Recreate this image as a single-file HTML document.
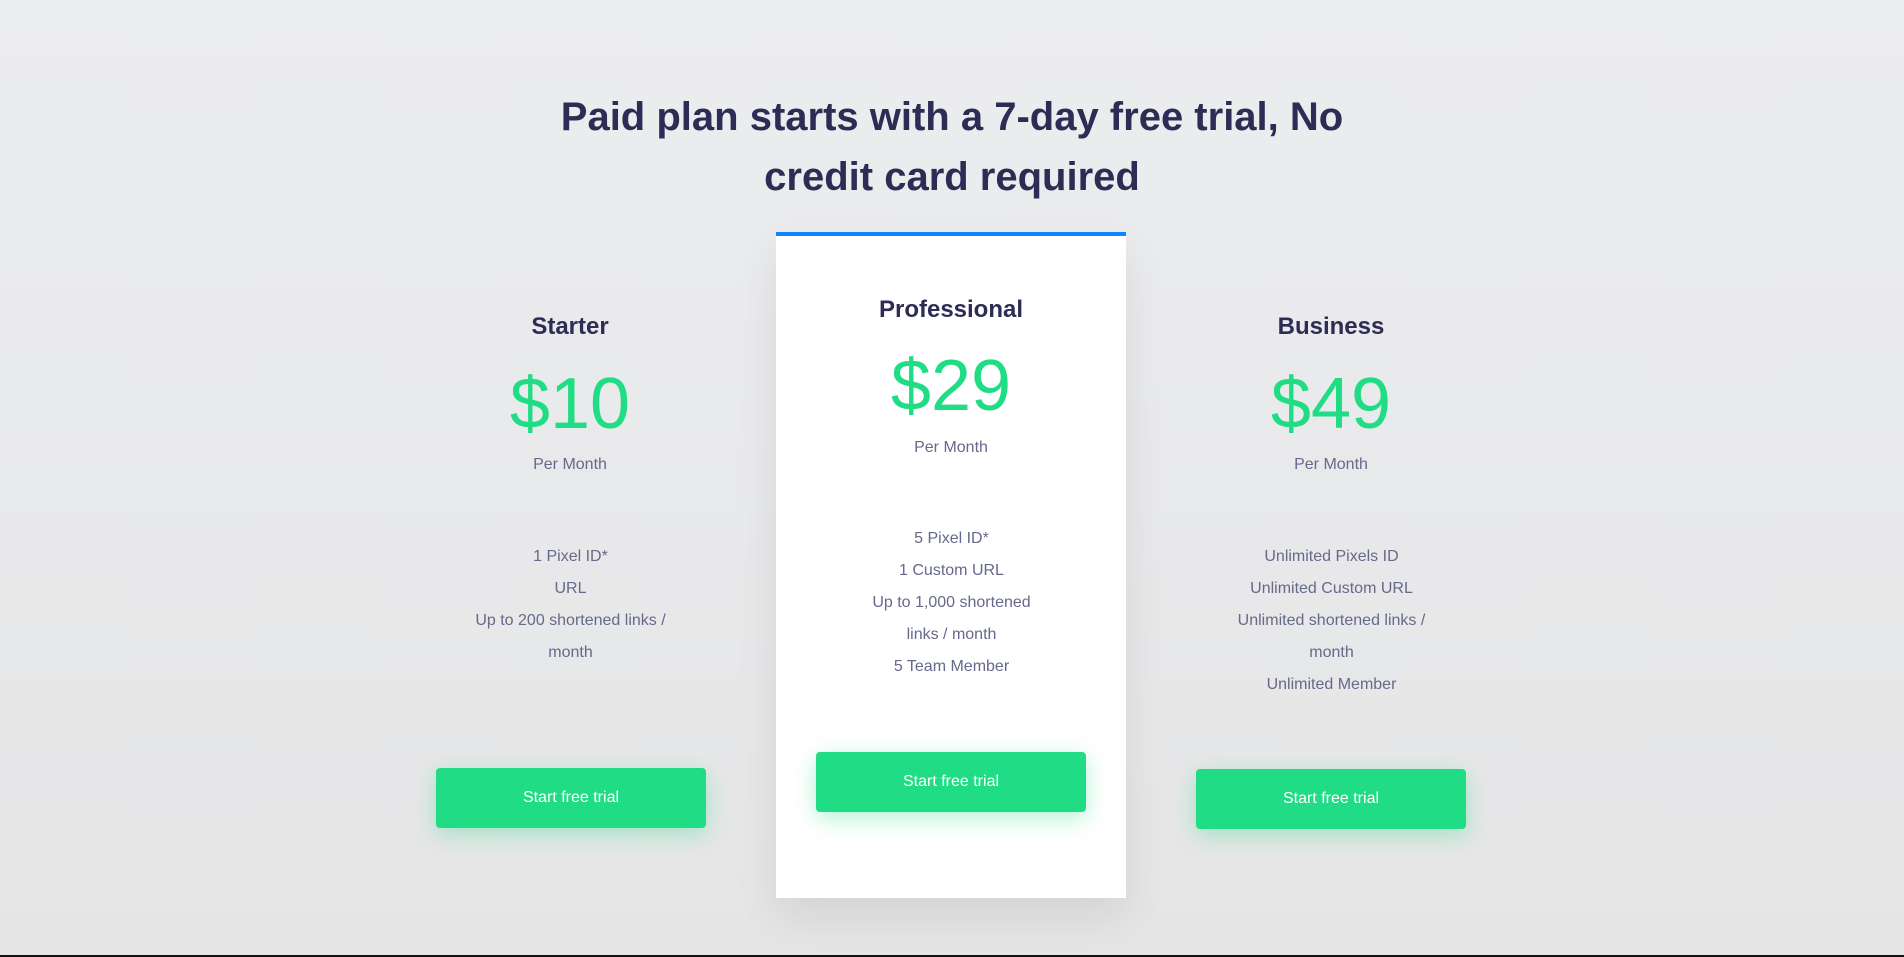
<!DOCTYPE html>
<html><head><meta charset="utf-8"><style>
*{margin:0;padding:0;box-sizing:border-box}
html,body{width:1904px;height:957px;overflow:hidden}
body{background:linear-gradient(#ecedef,#e5e5e6);font-family:"Liberation Sans",sans-serif;position:relative;border-bottom:2px solid #111}
.h{position:absolute;left:0;width:1904px;text-align:center;color:#2e2c55;font-weight:700;font-size:40px;line-height:60px;top:87px}
.card{position:absolute;left:776px;top:232px;width:350px;height:666px;background:#fff;border-top:4px solid #0d85ff;box-shadow:0 20px 40px rgba(0,0,0,.08)}
.t{position:absolute;text-align:center;width:400px;margin-left:-200px}
.title{color:#2e2c55;font-size:24px;font-weight:700;line-height:30px}
.price{color:#20dc84;font-size:72px;line-height:90px}
.pm{color:#66698a;font-size:16px;line-height:20px}
.f{color:#66698a;font-size:16px;line-height:32px}
.btn{position:absolute;width:270px;height:60px;background:#20dc84;color:#fff;font-size:16px;line-height:60px;text-align:center;border-radius:4px;box-shadow:0 6px 22px rgba(32,220,132,.35)}
</style></head><body>
<div class="h">Paid plan starts with a 7-day free trial, No<br>credit card required</div>
<div class="card"></div>

<div class="t title" style="left:570px;top:312px">Starter</div>
<div class="t price" style="left:570px;top:359px">$10</div>
<div class="t pm" style="left:570px;top:455px">Per Month</div>
<div class="t f" style="left:570px;top:541px;width:215px;margin-left:-107px">1 Pixel ID*<br>URL<br>Up to 200 shortened links / month</div>
<div class="btn" style="left:436px;top:768px">Start free trial</div>

<div class="t title" style="left:951px;top:295px">Professional</div>
<div class="t price" style="left:951px;top:341px">$29</div>
<div class="t pm" style="left:951px;top:438px">Per Month</div>
<div class="t f" style="left:951px;top:523px;width:185px;margin-left:-92px">5 Pixel ID*<br>1 Custom URL<br>Up to 1,000 shortened links / month<br>5 Team Member</div>
<div class="btn" style="left:816px;top:752px">Start free trial</div>

<div class="t title" style="left:1331px;top:312px">Business</div>
<div class="t price" style="left:1331px;top:359px">$49</div>
<div class="t pm" style="left:1331px;top:455px">Per Month</div>
<div class="t f" style="left:1331px;top:541px;width:215px;margin-left:-107px">Unlimited Pixels ID<br>Unlimited Custom URL<br>Unlimited shortened links / month<br>Unlimited Member</div>
<div class="btn" style="left:1196px;top:769px">Start free trial</div>
</body></html>
